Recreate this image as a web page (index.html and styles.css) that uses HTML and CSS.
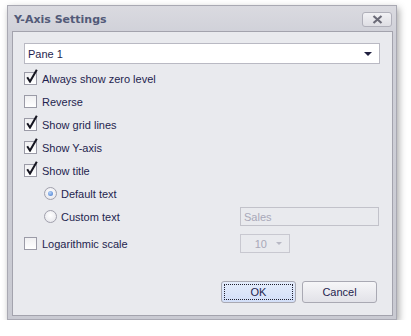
FILE: index.html
```html
<!DOCTYPE html>
<html lang="en">
<head>
    <meta charset="UTF-8">
    <title>Y-Axis Settings</title>
    <link rel="stylesheet" href="styles.css">
</head>
<body>
    <div class="window">
        <div class="title-bar">
            <span class="title">Y-Axis Settings</span>
            <button class="close-button">
                <svg width="11" height="9" viewBox="0 0 11 9"><path d="M1.5 1 L9.5 8 M9.5 1 L1.5 8" stroke="#6b6b78" stroke-width="2.2"/></svg>
            </button>
        </div>
        <div class="client">
            <div class="combo">
                <span>Pane 1</span>
                <span class="combo-arrow"></span>
            </div>

            <label class="row"><span class="check"><svg class="tick" width="12" height="14" viewBox="0 0 12 14"><path d="M1.2 8.2 L4 12.6 L10.8 0.8" fill="none" stroke="#151520" stroke-width="2"/></svg></span>Always show zero level</label>
            <label class="row"><span class="check"></span>Reverse</label>
            <label class="row"><span class="check"><svg class="tick" width="12" height="14" viewBox="0 0 12 14"><path d="M1.2 8.2 L4 12.6 L10.8 0.8" fill="none" stroke="#151520" stroke-width="2"/></svg></span>Show grid lines</label>
            <label class="row"><span class="check"><svg class="tick" width="12" height="14" viewBox="0 0 12 14"><path d="M1.2 8.2 L4 12.6 L10.8 0.8" fill="none" stroke="#151520" stroke-width="2"/></svg></span>Show Y-axis</label>
            <label class="row"><span class="check"><svg class="tick" width="12" height="14" viewBox="0 0 12 14"><path d="M1.2 8.2 L4 12.6 L10.8 0.8" fill="none" stroke="#151520" stroke-width="2"/></svg></span>Show title</label>

            <label class="row sub"><span class="radio selected"></span>Default text</label>
            <div class="row sub">
                <label class="radio-label"><span class="radio"></span>Custom text</label>
                <div class="text-box disabled">Sales</div>
            </div>

            <div class="row log-row">
                <label class="radio-label"><span class="check"></span>Logarithmic scale</label>
                <div class="spin disabled">10<span class="spin-arrow"></span></div>
            </div>

            <div class="buttons">
                <button class="button default"><span>OK</span></button>
                <button class="button">Cancel</button>
            </div>
        </div>
    </div>
</body>
</html>
```

FILE: styles.css
```css
body {
    margin: 0;
    background-color: #ffffff;
    font-family: "Liberation Sans", Tahoma, sans-serif;
    font-size: 11px;
    color: #1f1f4f;
}
.window {
    margin: 5px 0 0 7px;
    width: 388px;
    height: 313px;
    border: 1px solid #a9a9b3;
    background: linear-gradient(#dadae0, #cfd0d8 30px, #c9cad2);
    box-shadow: 2px 3px 7px rgba(0, 0, 0, 0.35);
    display: flex;
    flex-direction: column;
}
.title-bar {
    height: 25px;
    display: flex;
    align-items: center;
    justify-content: space-between;
    padding: 0 4px 0 6px;
}
.title {
    font-family: "DejaVu Sans", Tahoma, sans-serif;
    font-weight: bold;
    font-size: 11px;
    color: #525a78;
    margin-top: 1px;
}
.close-button {
    width: 30px;
    height: 15px;
    margin-top: 1px;
    padding: 0;
    border: 1px solid #b0b0ba;
    border-radius: 3px;
    background: linear-gradient(#f2f2f5, #dedee4);
    display: flex;
    align-items: center;
    justify-content: center;
}
.client {
    flex: 1;
    margin: 0 3px 3px 4px;
    border: 1px solid #a3a3ad;
    background-color: #e9eaee;
    padding: 11px 12px 0 11px;
    display: flex;
    flex-direction: column;
}
.combo {
    height: 19px;
    border: 1px solid #b9b9c3;
    background-color: #ffffff;
    display: flex;
    align-items: center;
    justify-content: space-between;
    padding: 0 7px 0 3px;
    margin-bottom: 3px;
}
.combo-arrow {
    width: 0;
    height: 0;
    border-left: 4px solid transparent;
    border-right: 4px solid transparent;
    border-top: 4px solid #1f1f3f;
}
.row {
    height: 23px;
    display: flex;
    align-items: center;
}
.sub {
    padding-left: 20px;
}
.radio-label {
    display: flex;
    align-items: center;
    width: 196px;
}
.check {
    position: relative;
    width: 11px;
    height: 11px;
    border: 1px solid #9b9ba7;
    background: linear-gradient(#f0f0f2, #ffffff);
    margin-right: 5px;
    flex: none;
}
.tick {
    position: absolute;
    left: 1px;
    top: -4px;
}
.radio {
    width: 11px;
    height: 11px;
    border-radius: 50%;
    border: 1px solid #a0a0ac;
    background: radial-gradient(circle at 50% 40%, #ffffff, #e2e2e8);
    margin-right: 4px;
    flex: none;
    display: flex;
    align-items: center;
    justify-content: center;
}
.radio.selected::after {
    content: "";
    width: 5px;
    height: 5px;
    border-radius: 50%;
    background: radial-gradient(circle at 40% 35%, #b8d4f8, #3c74cc);
}
.text-box {
    width: 134px;
    height: 17px;
    border: 1px solid #c2c2ca;
    display: flex;
    align-items: center;
    padding-left: 3px;
}
.disabled {
    color: #a8a8b8;
}
.log-row {
    margin-top: 4px;
}
.log-row .radio-label {
    width: 216px;
}
.spin {
    width: 50px;
    height: 19px;
    border: 1px solid #c8c8d0;
    display: flex;
    align-items: center;
    justify-content: flex-end;
    gap: 9px;
    padding-right: 7px;
    box-sizing: border-box;
}
.spin-arrow {
    width: 0;
    height: 0;
    border-left: 3px solid transparent;
    border-right: 3px solid transparent;
    border-top: 3px solid #b8b8c4;
}
.buttons {
    display: flex;
    justify-content: flex-end;
    gap: 6px;
    margin-top: 26px;
    padding-right: 3px;
}
.button {
    width: 75px;
    height: 22px;
    border: 1px solid #a9a9b3;
    border-radius: 3px;
    background: linear-gradient(#f6f6f8, #e2e2e8);
    font-family: "Liberation Sans", Tahoma, sans-serif;
    font-size: 11px;
    color: #1f1f4f;
    padding: 0;
}
.button.default {
    background: linear-gradient(#e4ecfb, #d3dff8);
    padding: 2px;
}
.button.default span {
    display: flex;
    align-items: center;
    justify-content: center;
    height: 100%;
    border: 1px dotted #202030;
    box-sizing: border-box;
}
```
